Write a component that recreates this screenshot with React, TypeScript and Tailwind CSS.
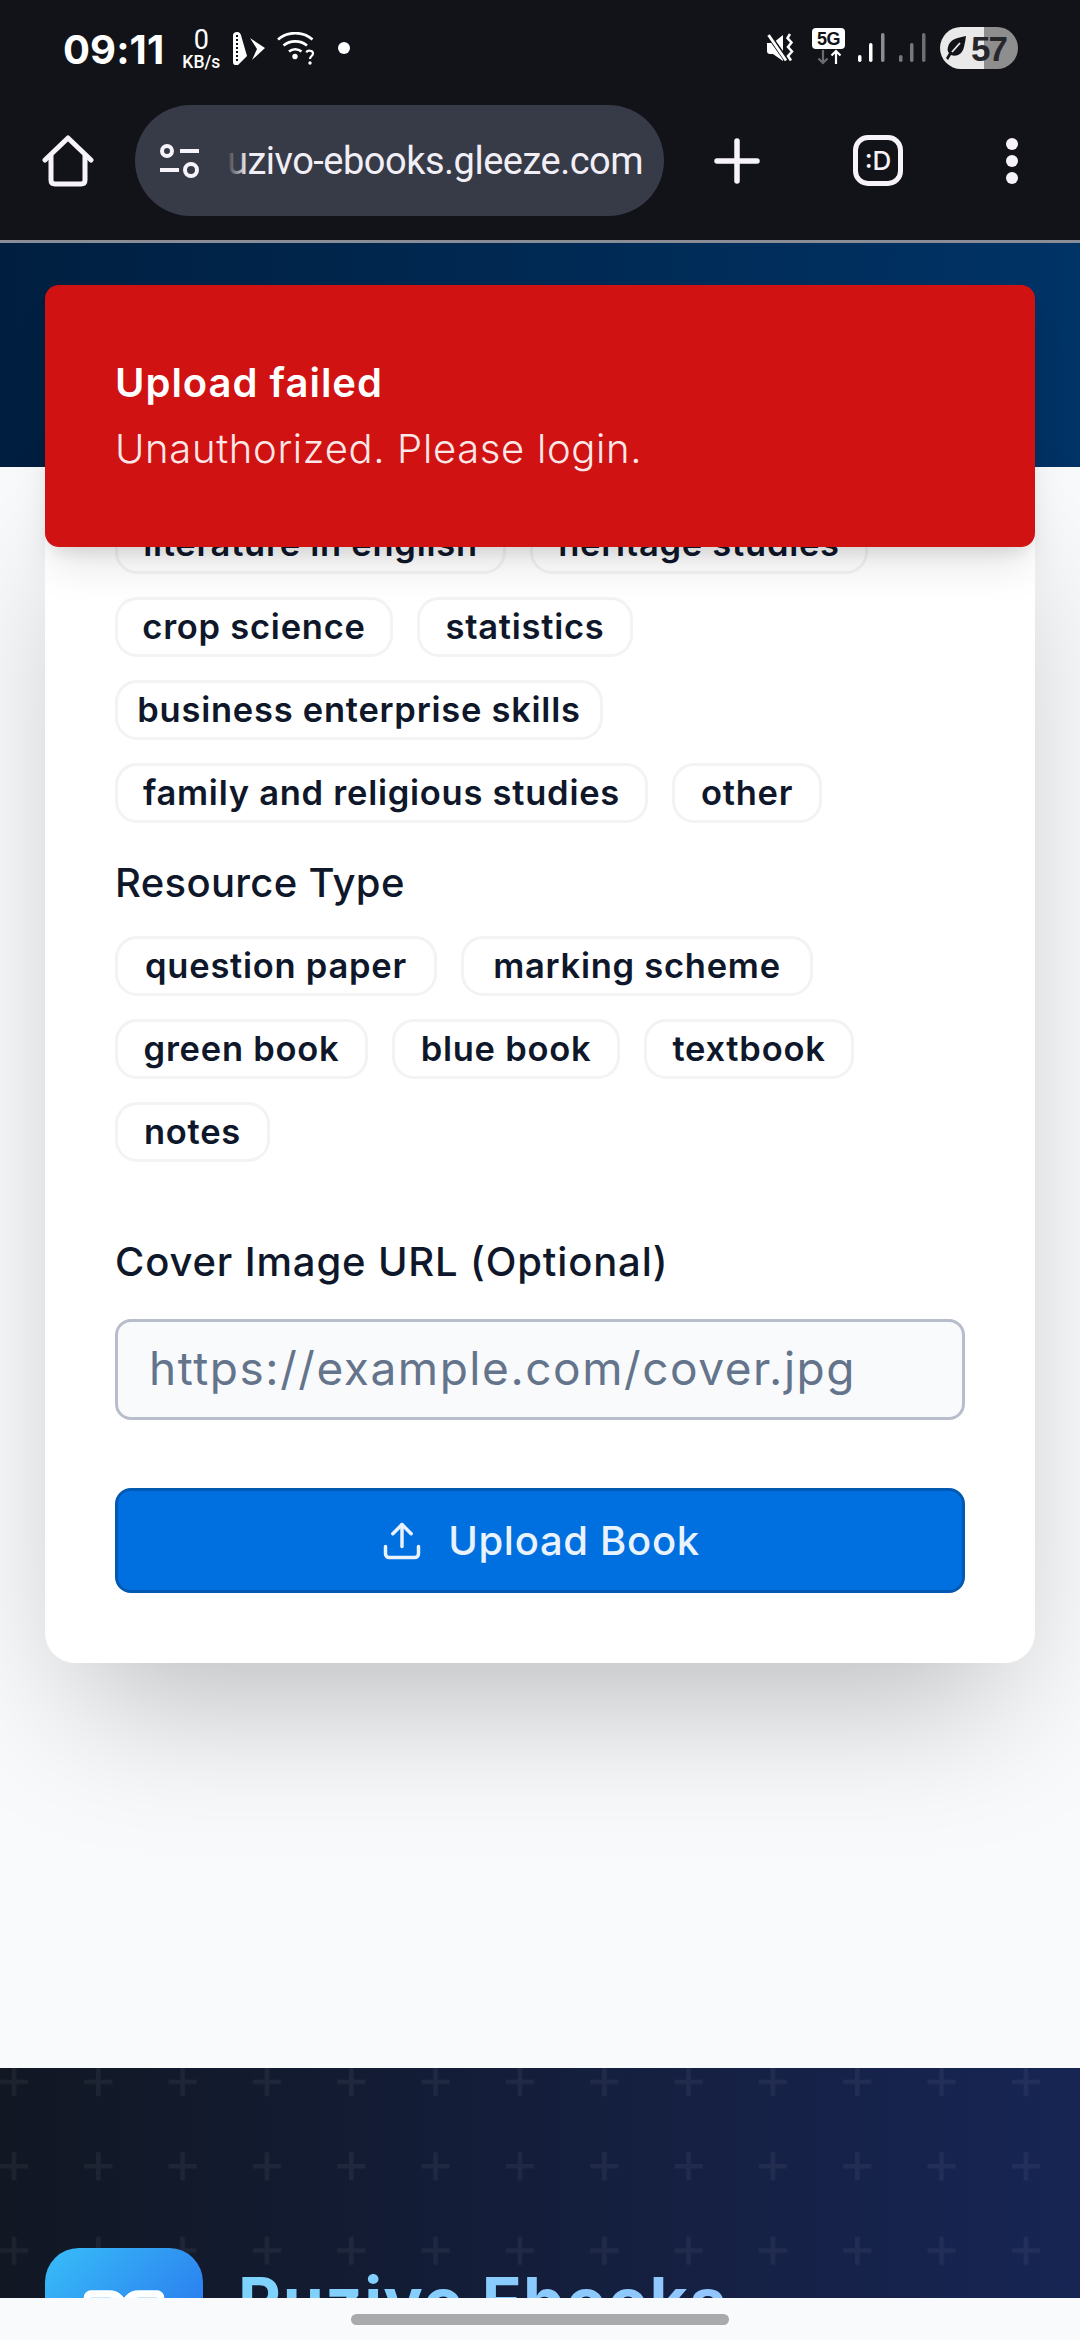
import { Upload, BookOpen } from "lucide-react";

function StatusBoltIcon() {
  return (
    <svg width="32" height="33" viewBox="0 0 32 33" className="ml-[13px]">
      <path d="M0 3C0 1 2 0 4 0c3 0 4 2 4.500 5L14 24l-9 9H2c-1 0-2-1-2-3z" fill="#fff" />
      <path d="M4 3v26" stroke="#121318" strokeWidth="2" strokeDasharray="2 2" />
      <path d="M17 6l15 10-13 12 5-11z" fill="#fff" />
    </svg>
  );
}

function WifiHelpIcon() {
  return (
    <svg width="38" height="33" viewBox="0 0 38 33" fill="none" className="ml-[12px]">
      <path d="M1 7.500c9.500-8.500 25-8.500 34.500 0" stroke="#fff" strokeWidth="2.600" />
      <path d="M6.500 13.500c6.500-5.500 17-5.500 23.500 0" stroke="#fff" strokeWidth="2.600" />
      <path d="M12 19.500c3.500-3 9-3 12.500 0" stroke="#fff" strokeWidth="2.600" />
      <circle cx="18" cy="24.500" r="2.700" fill="#fff" />
      <path d="M29.500 20.500c.5-2.500 6.500-2.500 6.500 1 0 2.500-3 2.500-3 5.500" stroke="#fff" strokeWidth="2.200" />
      <circle cx="33" cy="31" r="1.700" fill="#fff" />
    </svg>
  );
}

function MuteVibrateIcon() {
  return (
    <svg width="29" height="30" viewBox="0 0 29 30" fill="none">
      <path d="M0 10h6l10-8v26l-10-7H3c-2 0-3-1-3-3z" fill="#fff" />
      <path d="M1 1l19 27" stroke="#121318" strokeWidth="5" />
      <path d="M1.500 2l17.500 25.500" stroke="#fff" strokeWidth="2.800" />
      <path d="M23 1l-2.500 4 4 4.500-3.500 4.500 4 4.500-4 4.500 3 4.500" stroke="#fff" strokeWidth="2.500" />
    </svg>
  );
}

function FiveGIcon() {
  return (
    <div className="ml-[16px] flex w-[33px] flex-col items-center">
      <div className="flex h-[21px] w-[33px] items-center justify-center rounded-[4px] bg-white text-[18px] font-bold leading-none tracking-[-0.5px] text-[#121318] [font-family:'Liberation_Sans',sans-serif]">
        5G
      </div>
      <svg width="26" height="16" viewBox="0 0 26 16" fill="none">
        <path d="M7 1v13M2.500 9.500L7 14l4.500-4.500" stroke="#6b6c70" strokeWidth="2.200" />
        <path d="M20 15V2M15.500 6.500L20 2l4.500 4.500" stroke="#fff" strokeWidth="2.200" />
      </svg>
    </div>
  );
}

function SignalIcon({ dim }: { dim?: boolean }) {
  return (
    <svg width="27" height="30" viewBox="0 0 27 30" className={dim ? "ml-[14px]" : "ml-[13px]"}>
      <rect x="0" y="22" width="3.500" height="7" rx="1.700" fill={dim ? "#77787b" : "#fff"} />
      <rect x="11" y="10" width="3.500" height="19" rx="1.700" fill={dim ? "#77787b" : "#fff"} />
      <rect x="23" y="0" width="3.500" height="29" rx="1.700" fill={dim ? "#6d6e71" : "#8c8d90"} />
    </svg>
  );
}

function BatteryPill() {
  return (
    <div className="ml-[14px] flex h-[42px] w-[78px] items-center rounded-full bg-[linear-gradient(90deg,#e9e9e9_0,#e9e9e9_44px,#8e8e8e_44px,#8e8e8e_100%)] pl-[5px]">
      <svg width="22" height="26" viewBox="0 0 22 26">
        <path d="M21 1C12 3 5 4 3 12c-1 3 0 5 1 6L1 23l2 2 3-5c5 2 11 0 13-8 .7-3 1.500-7 2-11z" fill="#121318" />
        <path d="M7 17l8-9" stroke="#e9e9e9" strokeWidth="1.800" />
      </svg>
      <span className="ml-[4px] text-[35px] font-bold leading-none tracking-[-2px] text-[#26272b] [font-family:'Liberation_Sans',sans-serif]">
        57
      </span>
    </div>
  );
}

function StatusBar() {
  return (
    <div className="flex h-[105px] items-start pl-[63px] pr-[62px] pt-[27px]">
      <span className="mt-[-1px] text-[40px] font-bold leading-[48px] tracking-[0.1px] text-white [font-family:Inter,sans-serif]">
        09:11
      </span>
      <div className="ml-[18px] mt-[0px] flex w-[38px] flex-col items-center text-white [font-family:Roboto,sans-serif]">
        <span className="text-[27px] leading-[26px]">0</span>
        <span className="mt-[2px] text-[17.5px] font-medium leading-[14px]">KB/s</span>
      </div>
      <div className="mt-[5px]">
        <StatusBoltIcon />
      </div>
      <div className="mt-[5px]">
        <WifiHelpIcon />
      </div>
      <div className="ml-[23px] mt-[15px] h-[12px] w-[12px] rounded-full bg-white" />
      <div className="flex-1" />
      <div className="mt-[6px]">
        <MuteVibrateIcon />
      </div>
      <div className="mt-[1px]">
        <FiveGIcon />
      </div>
      <div className="mt-[6px]">
        <SignalIcon />
      </div>
      <div className="mt-[6px]">
        <SignalIcon dim />
      </div>
      <BatteryPill />
    </div>
  );
}

function BrowserBar() {
  return (
    <div className="flex h-[111px] items-center">
      <div className="ml-[42px] flex h-[52px] w-[52px] items-center justify-center">
        <svg width="52" height="52" viewBox="0 0 52 52" fill="none">
          <path d="M3 25L26 3l23 22" stroke="#f7f3fa" strokeWidth="5" strokeLinecap="round" strokeLinejoin="round" />
          <path d="M9 20v25c0 2.500 1.500 4 4 4h26c2.500 0 4-1.500 4-4V20" stroke="#f7f3fa" strokeWidth="5" strokeLinejoin="round" />
        </svg>
      </div>
      <div className="ml-[41px] flex h-[111px] w-[529px] items-center rounded-full bg-[#373a47] pl-[24px]">
        <svg width="42" height="36" viewBox="0 0 42 36" fill="none">
          <circle cx="8" cy="8" r="5" stroke="#f7f3fa" strokeWidth="4" />
          <path d="M21 8h19M1 27h19" stroke="#f7f3fa" strokeWidth="4" />
          <circle cx="32" cy="27" r="6" stroke="#f7f3fa" strokeWidth="4" />
        </svg>
        <div className="relative ml-[26px]">
          <span className="text-[38px] leading-[46px] tracking-[-0.5px] text-[#f1eff5] [font-family:Roboto,sans-serif]">
            uzivo-ebooks.gleeze.com
          </span>
          <div className="absolute left-0 top-0 h-full w-[20px] bg-[linear-gradient(90deg,#373a47,rgba(55,58,71,0))]" />
        </div>
      </div>
      <div className="ml-[50px] flex h-[46px] w-[46px] items-center justify-center">
        <svg width="46" height="46" viewBox="0 0 46 46" fill="none">
          <path d="M23 3v40M3 23h40" stroke="#f7f3fa" strokeWidth="5.500" strokeLinecap="round" />
        </svg>
      </div>
      <div className="ml-[93px] flex h-[51px] w-[50px] items-center justify-center rounded-[15px] border-[5px] border-[#f7f3fa] text-[26px] font-medium leading-none text-[#f7f3fa] [font-family:Inter,sans-serif]">
        :D
      </div>
      <div className="ml-[103px] flex flex-col gap-[5px]">
        <div className="h-[12px] w-[12px] rounded-full bg-[#f7f3fa]" />
        <div className="h-[12px] w-[12px] rounded-full bg-[#f7f3fa]" />
        <div className="h-[12px] w-[12px] rounded-full bg-[#f7f3fa]" />
      </div>
    </div>
  );
}

const subjectRows = [
  [
    { t: "literature in english", w: "w-[391px]" },
    { t: "heritage studies", w: "w-[338px]" },
  ],
  [
    { t: "crop science", w: "w-[278px]" },
    { t: "statistics", w: "w-[216px]" },
  ],
  [{ t: "business enterprise skills", w: "w-[488px]" }],
  [
    { t: "family and religious studies", w: "w-[533px]" },
    { t: "other", w: "w-[150px]" },
  ],
];

const resourceRows = [
  [
    { t: "question paper", w: "w-[322px]" },
    { t: "marking scheme", w: "w-[352px]" },
  ],
  [
    { t: "green book", w: "w-[253px]" },
    { t: "blue book", w: "w-[228px]" },
    { t: "textbook", w: "w-[210px]" },
  ],
  [{ t: "notes", w: "w-[155px]" }],
];

function ChipRows({ rows }: { rows: { t: string; w: string }[][] }) {
  return (
    <div className="flex flex-col gap-[23px]">
      {rows.map((row) => (
        <div key={row[0].t} className="flex gap-[24px]">
          {row.map((c) => (
            <div
              key={c.t}
              className={`${c.w} flex h-[60px] items-center justify-center whitespace-nowrap rounded-[22px] border-[3px] border-[#f1f3f5] bg-white text-[34.5px] font-[560] tracking-[0.75px] text-[#0f172a]`}
            >
              {c.t}
            </div>
          ))}
        </div>
      ))}
    </div>
  );
}

export default function App() {
  return (
    <div className="flex h-[2340px] w-[1080px] flex-col overflow-hidden bg-[#f8fafc] [font-family:Inter,sans-serif]">
      <div className="h-[243px] shrink-0 border-b-[3px] border-[#8a8d96] bg-[#121318]">
        <StatusBar />
        <BrowserBar />
      </div>

      <main className="relative flex min-h-0 flex-1 flex-col overflow-hidden">
        <div className="h-[224px] shrink-0 bg-[linear-gradient(90deg,#001f40,#003366)]" />

        <div className="relative mx-[45px] rounded-b-[30px] bg-white px-[70px] pb-[70px] pt-[47px] shadow-[0_69px_138px_-33px_rgba(0,0,0,0.25)]">
          <ChipRows rows={subjectRows} />
          <h3 className="mb-[24px] mt-[31px] text-[40px] font-[450] leading-[58px] tracking-[0.33px] text-[#0f172a]">
            Resource Type
          </h3>
          <ChipRows rows={resourceRows} />
          <label className="mb-[28px] mt-[71px] block text-[40px] font-[450] leading-[58px] tracking-[0.85px] text-[#0f172a]">
            Cover Image URL (Optional)
          </label>
          <input
            readOnly
            placeholder="https://example.com/cover.jpg"
            className="block h-[101px] w-full rounded-[16px] border-[3px] border-[#b8bdcb] bg-[#f9fafc] px-[31px] pb-[3px] text-[46px] font-normal tracking-[1.55px] outline-none placeholder:text-[#64748b]"
          />
          <button className="mt-[68px] flex h-[105px] w-full items-center justify-center gap-[24px] rounded-[16px] border-[3px] border-[#0059b3] bg-[#0070e0] text-[40px] font-medium tracking-[0.7px] text-[#eaf3fd]">
            <Upload size={44} strokeWidth={1.9} />
            Upload Book
          </button>
        </div>

        <footer className="relative mt-[405px] min-h-0 flex-1 overflow-hidden bg-[linear-gradient(90deg,#111723,#172554)]">
          <svg className="absolute inset-0 h-full w-full" aria-hidden="true">
            <defs>
              <pattern id="plus" x="-28" y="-28" width="84.33" height="84.33" patternUnits="userSpaceOnUse">
                <path d="M28 42h28M42 28v28" stroke="#ffffff" strokeOpacity="0.05" strokeWidth="4.500" />
              </pattern>
            </defs>
            <rect width="100%" height="100%" fill="url(#plus)" />
          </svg>
          <div className="relative ml-[45px] mt-[180px] flex items-start">
            <div className="flex h-[157px] w-[158px] shrink-0 items-center justify-center rounded-[34px] bg-[linear-gradient(135deg,#38bdf8,#2563eb)] text-white">
              <BookOpen size={88} strokeWidth={2} />
            </div>
            <span className="ml-[35px] mt-[13px] whitespace-nowrap bg-[linear-gradient(90deg,#7dd3fc,#93c5fd)] bg-clip-text text-[66px] font-bold leading-[80px] tracking-[1.3px] text-transparent">
              Ruzivo Ebooks
            </span>
          </div>
        </footer>

        <div className="absolute left-[45px] right-[45px] top-[42px] flex h-[262px] flex-col justify-center rounded-[14px] bg-[#d01212] pl-[70px] shadow-[0_27px_41px_-8px_rgba(0,0,0,0.1),0_11px_16px_-6px_rgba(0,0,0,0.1)]">
          <div className="text-[40px] font-semibold leading-[66px] tracking-[1px] text-white">Upload failed</div>
          <div className="text-[40px] font-light leading-[66px] tracking-[0.67px] text-[#fbe7e7]">
            Unauthorized. Please login.
          </div>
        </div>
      </main>

      <div className="flex h-[42px] shrink-0 items-start justify-center bg-[#f8fafc] pt-[16px]">
        <div className="h-[11px] w-[378px] rounded-full bg-[#a9aaac]" />
      </div>
    </div>
  );
}
